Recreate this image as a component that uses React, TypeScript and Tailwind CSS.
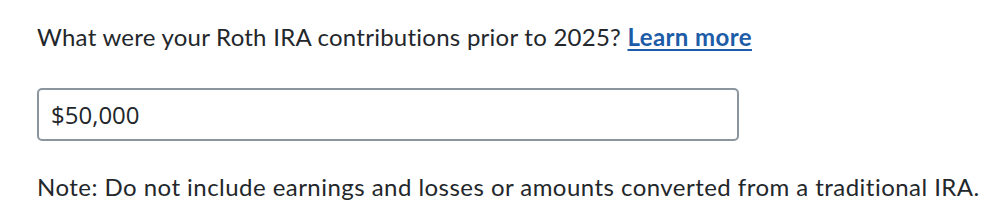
import React from "react";

export default function App() {
  return (
    <div className="w-[997px] h-[223px] bg-white pl-[37px] pt-[21px] text-[#23272b]" style={{ fontFamily: "Lato, 'Noto Sans', sans-serif" }}>
      <p className="text-[24px] leading-[32px] tracking-[0.25px]">
        What were your Roth IRA contributions prior to 2025?{" "}
        <a href="#" className="font-bold text-[#1d5ca7] underline decoration-2 underline-offset-[3px] tracking-[0.4px]">Learn more</a>
      </p>
      <div className="mt-[35px] w-[702px] h-[53px] border-2 border-[#8a969f] rounded-[5px] flex items-center px-[12px]">
        <span className="text-[24px]" style={{ fontFamily: "'Open Sans', sans-serif" }}>$50,000</span>
      </div>
      <p className="mt-[30px] text-[24px] leading-[32px] tracking-[0.46px]">
        Note: Do not include earnings and losses or amounts converted from a traditional IRA.
      </p>
    </div>
  );
}
